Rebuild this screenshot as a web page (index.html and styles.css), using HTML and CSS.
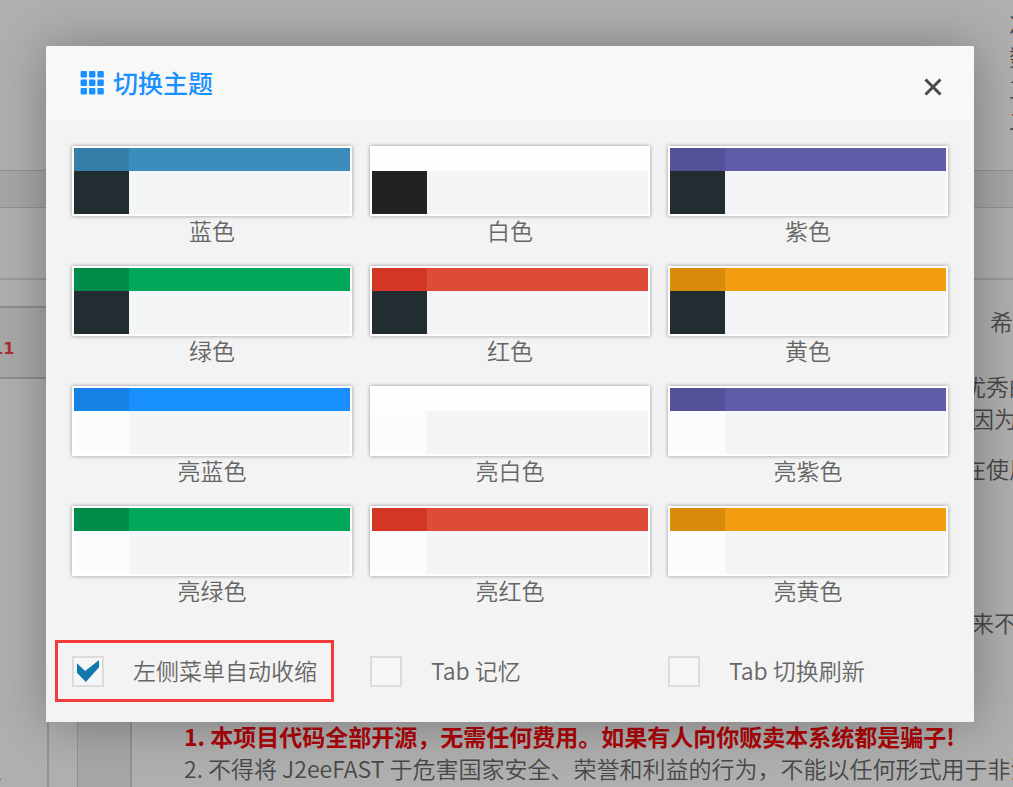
FILE: index.html
```html
<!DOCTYPE html>
<html lang="zh-CN">
<head>
    <meta charset="UTF-8">
    <meta name="viewport" content="width=device-width, initial-scale=1.0">
    <title>切换主题</title>
    <link rel="stylesheet" href="styles.css">
</head>
<body>
    <div class="page">
        <div class="topbar">
            <div class="topbar-text">次<br>数<br>工<br>二</div>
        </div>
        <div class="tabs"></div>
        <div class="toolbar"></div>
        <div class="main">
            <div class="sidebar">
                <div class="notice">.11</div>
                <span class="dot">.</span>
            </div>
            <div class="gutter"></div>
            <div class="strip"></div>
            <div class="content">
                <div class="intro">
                    <p class="last">希</p>
                    <p>优秀的</p>
                    <p class="cut">因为</p>
                    <p class="gap">在使用</p>
                    <p class="cut far">来不</p>
                </div>
                <div class="rules">
                    <p class="warn">1. 本项目代码全部开源，无需任何费用。如果有人向你贩卖本系统都是骗子!</p>
                    <p>2. 不得将 J2eeFAST 于危害国家安全、荣誉和利益的行为，不能以任何形式用于非法</p>
                </div>
            </div>
        </div>
    </div>

    <div class="dialog" role="dialog" aria-labelledby="dialog-title">
        <div class="dialog-header">
            <svg class="icon-grid" viewBox="0 0 24 24" width="24" height="24">
                <rect x="0.6" y="0" width="6.4" height="6.4" rx="1"/>
                <rect x="9" y="0" width="6.4" height="6.4" rx="1"/>
                <rect x="17.4" y="0" width="6.4" height="6.4" rx="1"/>
                <rect x="0.6" y="8.5" width="6.4" height="6.4" rx="1"/>
                <rect x="9" y="8.5" width="6.4" height="6.4" rx="1"/>
                <rect x="17.4" y="8.5" width="6.4" height="6.4" rx="1"/>
                <rect x="0.6" y="17" width="6.4" height="6.4" rx="1"/>
                <rect x="9" y="17" width="6.4" height="6.4" rx="1"/>
                <rect x="17.4" y="17" width="6.4" height="6.4" rx="1"/>
            </svg>
            <h2 id="dialog-title">切换主题</h2>
            <button class="close" type="button" aria-label="关闭">
                <svg viewBox="0 0 18 18" width="18" height="18">
                    <path d="M1.5 1.5L16.5 16.5M16.5 1.5L1.5 16.5"/>
                </svg>
            </button>
        </div>

        <div class="dialog-body">
            <div class="themes">
                <a href="#" class="theme blue"><span class="preview"><i class="logo"></i><i class="bar"></i><i class="side"></i><i class="body"></i></span>蓝色</a>
                <a href="#" class="theme white"><span class="preview"><i class="logo"></i><i class="bar"></i><i class="side"></i><i class="body"></i></span>白色</a>
                <a href="#" class="theme purple"><span class="preview"><i class="logo"></i><i class="bar"></i><i class="side"></i><i class="body"></i></span>紫色</a>
                <a href="#" class="theme green"><span class="preview"><i class="logo"></i><i class="bar"></i><i class="side"></i><i class="body"></i></span>绿色</a>
                <a href="#" class="theme red"><span class="preview"><i class="logo"></i><i class="bar"></i><i class="side"></i><i class="body"></i></span>红色</a>
                <a href="#" class="theme yellow"><span class="preview"><i class="logo"></i><i class="bar"></i><i class="side"></i><i class="body"></i></span>黄色</a>
                <a href="#" class="theme azure light"><span class="preview"><i class="logo"></i><i class="bar"></i><i class="side"></i><i class="body"></i></span>亮蓝色</a>
                <a href="#" class="theme white light"><span class="preview"><i class="logo"></i><i class="bar"></i><i class="side"></i><i class="body"></i></span>亮白色</a>
                <a href="#" class="theme purple light"><span class="preview"><i class="logo"></i><i class="bar"></i><i class="side"></i><i class="body"></i></span>亮紫色</a>
                <a href="#" class="theme green light"><span class="preview"><i class="logo"></i><i class="bar"></i><i class="side"></i><i class="body"></i></span>亮绿色</a>
                <a href="#" class="theme red light"><span class="preview"><i class="logo"></i><i class="bar"></i><i class="side"></i><i class="body"></i></span>亮红色</a>
                <a href="#" class="theme yellow light"><span class="preview"><i class="logo"></i><i class="bar"></i><i class="side"></i><i class="body"></i></span>亮黄色</a>
            </div>

            <div class="options">
                <div class="option marked">
                    <input type="checkbox" id="collapse" checked>
                    <label for="collapse">左侧菜单自动收缩</label>
                </div>
                <div class="option">
                    <input type="checkbox" id="tab-memory">
                    <label for="tab-memory">Tab 记忆</label>
                </div>
                <div class="option">
                    <input type="checkbox" id="tab-refresh">
                    <label for="tab-refresh">Tab 切换刷新</label>
                </div>
            </div>
        </div>
    </div>
</body>
</html>
```
FILE: styles.css
```css
* {
    box-sizing: border-box;
}
body {
    margin: 0;
    font-family: "Noto Sans CJK SC", sans-serif;
    font-size: 23px;
    font-weight: 350;
    line-height: 32px;
    color: #666;
}
p, h2 {
    margin: 0;
}

/* page under the dialog */
.page {
    display: flex;
    flex-direction: column;
    height: 100vh;
    overflow: hidden;
    background-color: #afafaf;
    color: #484848;
}
.topbar {
    flex: none;
    height: 170px;
    padding-top: 8px;
}
.topbar-text {
    width: 4px;
    margin-left: auto;
    overflow: hidden;
}
.tabs {
    flex: none;
    height: 38px;
    background-color: #a6a6a6;
    border-top: 1px solid #929292;
    border-bottom: 1px solid #929292;
}
.toolbar {
    flex: none;
    height: 72px;
    border-bottom: 2px solid #9a9a9a;
}
.main {
    flex: 1;
    min-height: 0;
    display: grid;
    grid-template-columns: 49px 28px 55px 1fr;
}
.sidebar {
    display: flex;
    flex-direction: column;
    justify-content: space-between;
    padding-top: 26px;
    border-right: 2px solid #929292;
}
.notice {
    height: 73px;
    padding-top: 25px;
    border-top: 2px solid #8e8e8e;
    border-bottom: 2px solid #8e8e8e;
    background-color: #aaa7a7;
    color: #a92f31;
    font-family: "DejaVu Sans", sans-serif;
    font-size: 16px;
    font-weight: bold;
    line-height: 32px;
    text-indent: -14px;
}
.dot {
    text-indent: -4px;
}
.strip {
    background-color: #a6a6a6;
    border-left: 1px solid #929292;
    border-right: 2px solid #929292;
}
.content {
    min-width: 0;
    padding: 25px 0 0 52px;
    overflow: hidden;
    white-space: nowrap;
}
.intro {
    width: 50px;
    height: 415px;
    margin-left: auto;
}
.intro .last {
    margin-bottom: 33px;
    text-align: right;
}
.intro .cut {
    padding-left: 8px;
}
.intro .gap {
    margin-top: 18px;
}
.intro .far {
    margin-top: 122px;
}
.warn {
    color: #ad0508;
    font-weight: bold;
}

/* dialog */
.dialog {
    position: absolute;
    top: 46px;
    left: 46px;
    right: 39px;
    background-color: #f3f3f3;
    border-radius: 2px 2px 0 0;
    box-shadow: 1px 1px 50px rgba(0, 0, 0, 0.3);
}
.dialog-header {
    display: flex;
    align-items: center;
    gap: 9px;
    height: 74px;
    padding: 0 32px 0 34px;
    background-color: #f8f8f8;
    border-radius: 2px 2px 0 0;
}
.icon-grid {
    fill: #1890ff;
}
.dialog-header h2 {
    padding-bottom: 2px;
    color: #1890ff;
    font-size: 25px;
    font-weight: 500;
}
.close {
    display: flex;
    margin: 8px 0 0 auto;
    padding: 0;
    border: none;
    background: none;
    cursor: pointer;
}
.close path {
    fill: none;
    stroke: #4a4a4c;
    stroke-width: 3;
}
.dialog-body {
    padding: 26px 26px 35px;
}
.themes, .options {
    display: grid;
    grid-template-columns: repeat(3, 1fr);
    column-gap: 18px;
}
.themes {
    row-gap: 22px;
}
.theme {
    color: #666;
    line-height: 28px;
    text-align: center;
    text-decoration: none;
}
.preview {
    display: grid;
    grid-template-columns: 1fr 4fr;
    grid-template-rows: 23px 1fr;
    height: 70px;
    border: 2px solid #fff;
    box-shadow: 0 0 4px rgba(0, 0, 0, 0.4);
}
.side {
    background-color: #222d32;
}
.body {
    background-color: #f4f5f7;
}
.light .side {
    background-color: #fafcfd;
}
.blue .logo { background-color: #367fa9; }
.blue .bar { background-color: #3c8dbc; }
.white .logo, .white .bar { background-color: #fefefe; }
.white:not(.light) .side { background-color: #222; }
.purple .logo { background-color: #555299; }
.purple .bar { background-color: #605ca8; }
.green .logo { background-color: #008d4c; }
.green .bar { background-color: #00a65a; }
.red .logo { background-color: #d33724; }
.red .bar { background-color: #dd4b39; }
.yellow .logo { background-color: #db8b0b; }
.yellow .bar { background-color: #f39c12; }
.azure .logo { background-color: #1682e6; }
.azure .bar { background-color: #1890ff; }

.options {
    margin-top: 52px;
    justify-items: start;
}
.option {
    position: relative;
    display: flex;
    align-items: center;
    gap: 29px;
    height: 31px;
}
.option label {
    padding-bottom: 3px;
}
.option input {
    appearance: none;
    width: 32px;
    height: 31px;
    margin: 0;
    border: 2px solid #dcdcdc;
    background-color: #f6f6f6;
}
.option input:checked::before {
    content: "";
    display: block;
    width: 24px;
    height: 23px;
    margin: 2px;
    background-color: #1279ac;
    clip-path: polygon(4% 14%, 38% 48%, 96% 0%, 96% 32%, 41% 96%, 4% 55%);
}
/* red frame around the highlighted option */
.marked::after {
    content: "";
    position: absolute;
    inset: -16px -17px -15px -17px;
    border: 3px solid #f23c3c;
    pointer-events: none;
}
```
